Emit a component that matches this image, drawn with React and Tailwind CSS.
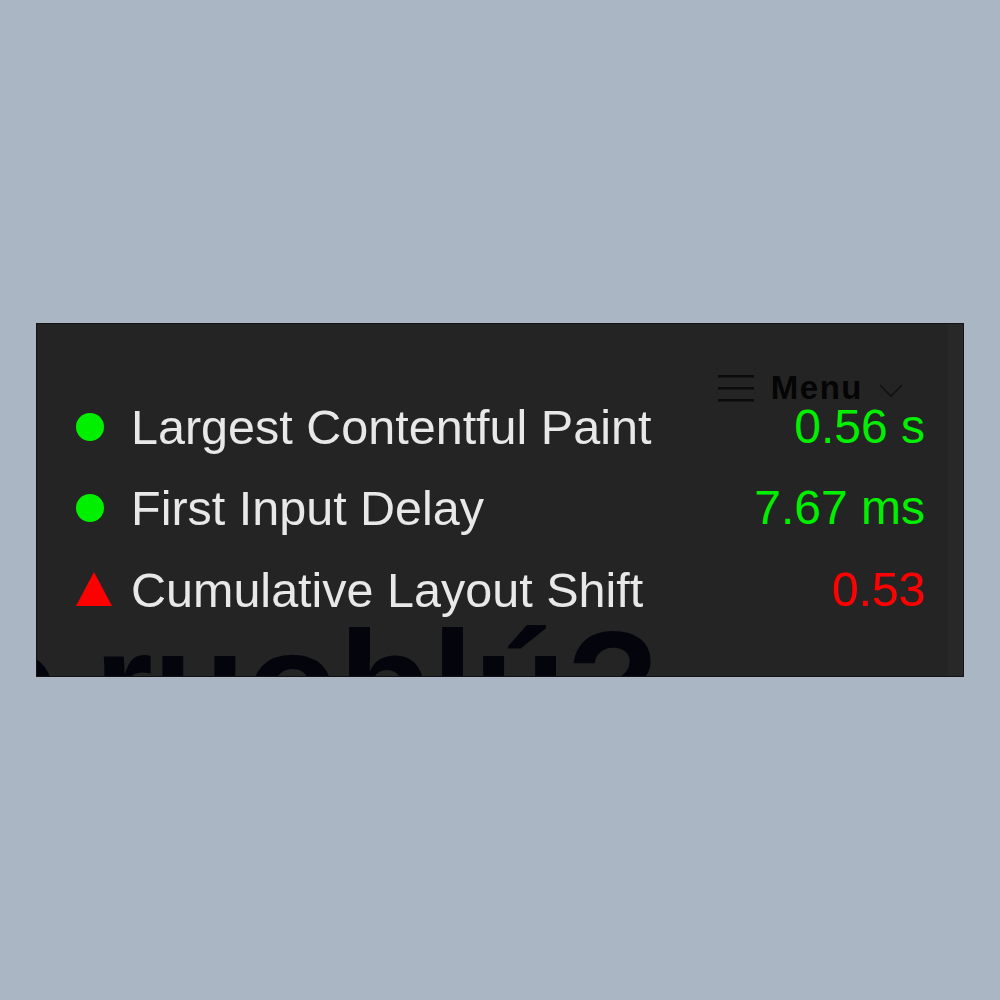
import React from "react";

const rows = [
  { label: "Largest Contentful Paint", value: "0.56 s", status: "good" },
  { label: "First Input Delay", value: "7.67 ms", status: "good" },
  { label: "Cumulative Layout Shift", value: "0.53", status: "poor" },
];

function Marker({ status }) {
  if (status === "good") {
    return (
      <div className="w-[44px] flex justify-start">
        <div className="w-[28px] h-[28px] rounded-full bg-[#00f000]" />
      </div>
    );
  }
  return (
    <div className="w-[44px] flex justify-start">
      <svg width="36" height="34" viewBox="0 0 36 34" className="-mt-[2px]">
        <polygon points="18,0 36,34 0,34" fill="#ff0000" />
      </svg>
    </div>
  );
}

export default function App() {
  return (
    <div className="w-[1000px] h-[1000px] bg-[#aab6c3] pt-[323px] pl-[36px] font-['Liberation_Sans',Arial,sans-serif]">
      <div className="relative w-[928px] h-[354px] bg-[#242424] border border-[#141414] overflow-hidden">
        {/* faint right strip */}
        <div className="absolute top-0 right-0 w-[15px] h-full bg-[#282828]" />

        {/* big heading behind */}
        <div className="absolute left-[-63px] top-[284px] whitespace-nowrap text-[152px] leading-none font-bold text-[#04040d] select-none [word-spacing:-7px]">
          e ruoblú?
        </div>

        {/* Menu overlay */}
        <div className="absolute top-[47px] right-[60px] flex items-center">
          <svg width="36" height="30" viewBox="0 0 36 30" className="mr-[17px]">
            <rect x="0" y="2" width="36" height="2.5" fill="#0b0b0b" />
            <rect x="0" y="14" width="36" height="2.5" fill="#0b0b0b" />
            <rect x="0" y="26" width="36" height="2.5" fill="#0b0b0b" />
          </svg>
          <span className="text-[33px] leading-none font-bold tracking-[1.5px] text-[#050505]">Menu</span>
          <svg width="24" height="14" viewBox="0 0 24 14" className="ml-[16px] mt-[6px]">
            <polyline points="1,1 12,12 23,1" fill="none" stroke="#111" strokeWidth="1.6" />
          </svg>
        </div>

        {/* metrics */}
        <div className="relative pt-[62px] pl-[39px] pr-[38px]">
          {rows.map((r) => (
            <div key={r.label} className="h-[81.5px] flex items-center">
              <Marker status={r.status} />
              <span className="ml-[11px] text-[48.5px] leading-none text-[#e8e8e8]">{r.label}</span>
              <span
                className={
                  "ml-auto text-[48px] leading-none " +
                  (r.status === "good" ? "text-[#00f000]" : "text-[#ff0000]")
                }
              >
                {r.value}
              </span>
            </div>
          ))}
        </div>
      </div>
    </div>
  );
}
